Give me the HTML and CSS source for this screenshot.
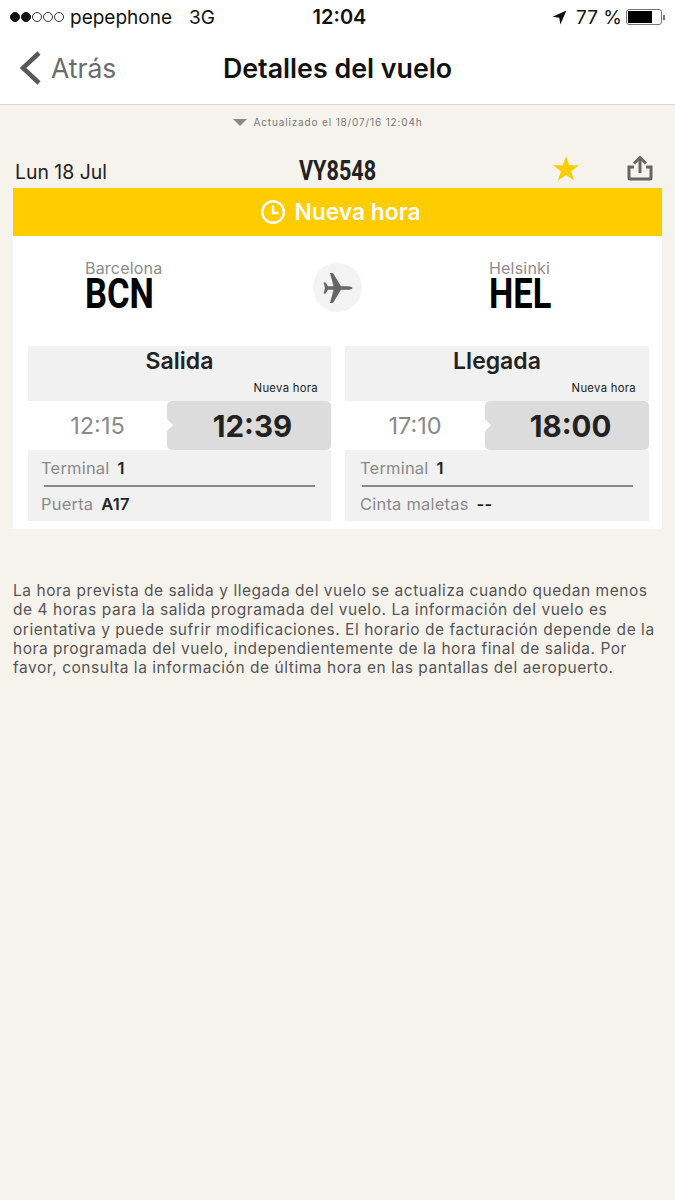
FILE: index.html
```html
<!DOCTYPE html>
<html lang="es">
<head>
    <meta charset="UTF-8">
    <meta name="viewport" content="width=device-width, initial-scale=1.0">
    <title>Detalles del vuelo</title>
    <link rel="stylesheet" href="styles.css">
</head>
<body>
<div class="top">
    <div class="status">
        <div class="status-left">
            <span class="dot on"></span><span class="dot on"></span><span class="dot"></span><span class="dot"></span><span class="dot"></span>
            <span class="carrier">pepephone</span>
            <span class="net">3G</span>
        </div>
        <div class="clock">12:04</div>
        <div class="status-right">
            <svg class="arrow" width="15" height="15" viewBox="0 0 14 14"><path d="M13.5 .5 L.5 6.300 L6.800 7.200 L7.800 13.500 Z" fill="#111"/></svg>
            <span class="pct">77 %</span>
            <div class="battery"><div class="battery-fill"></div></div>
            <div class="battery-tip"></div>
        </div>
    </div>
    <div class="nav">
        <div class="back">
            <svg width="24" height="36" viewBox="0 0 24 36"><path d="M21 3 L5 18 L21 33" fill="none" stroke="#595959" stroke-width="4.500"/></svg>
            <span>Atrás</span>
        </div>
        <div class="nav-title">Detalles del vuelo</div>
    </div>
</div>

<div class="updated"><span class="tri"></span>Actualizado el 18/07/16 12:04h</div>

<div class="flight-head">
    <div class="date">Lun 18 Jul</div>
    <div class="code">VY8548</div>
    <svg class="star" width="28" height="27" viewBox="0 0 28 27"><path d="M14 1 L17.200 10.300 L27 10.300 L19.100 16.200 L22 25.600 L14 20 L6 25.600 L8.900 16.200 L1 10.300 L10.800 10.300 Z" fill="#fc0"/></svg>
    <svg class="share" width="26" height="26" viewBox="0 0 26 26" fill="none" stroke="#666" stroke-width="3"><path d="M7 12 H2 V23 a1 1 0 0 0 1 1 H23 a1 1 0 0 0 1 -1 V12 H19"/><path d="M13 18 V3"/><path d="M7 8.500 L13 2.500 L19 8.500"/></svg>
</div>

<div class="banner">
    <svg width="26" height="26" viewBox="0 0 26 26" fill="none" stroke="#fff" stroke-width="2.400"><circle cx="13" cy="13" r="10.800"/><path d="M13 6.500 V14 H18.500"/></svg>
    <span>Nueva hora</span>
</div>

<div class="card">
    <div class="route">
        <div class="place place-from">
            <div class="city">Barcelona</div>
            <div class="iata">BCN</div>
        </div>
        <div class="plane">
            <svg width="30" height="30" viewBox="0 0 30 30"><path d="M29.500 15 C29 14 27 13.200 25 13.200 H18 L10 0 H7 L10.500 13.200 H5 L2.500 9.500 H.5 L2 15 L.5 20.500 H2.500 L5 16.800 H10.500 L7 30 H10 L18 16.800 H25 C27 16.800 29 16 29.500 15 Z" fill="#666"/></svg>
        </div>
        <div class="place place-to">
            <div class="city">Helsinki</div>
            <div class="iata">HEL</div>
        </div>
    </div>

    <div class="columns">
        <div class="col">
            <div class="col-head">
                <h2>Salida</h2>
                <div class="new-label">Nueva hora</div>
            </div>
            <div class="times">
                <div class="old-time">12:15</div>
                <div class="new-time">12:39</div>
            </div>
            <div class="info">
                <div class="info-row line"><span class="lbl">Terminal</span><b>1</b></div>
                <div class="info-row"><span class="lbl">Puerta</span><b>A17</b></div>
            </div>
        </div>
        <div class="col">
            <div class="col-head">
                <h2>Llegada</h2>
                <div class="new-label">Nueva hora</div>
            </div>
            <div class="times">
                <div class="old-time">17:10</div>
                <div class="new-time">18:00</div>
            </div>
            <div class="info">
                <div class="info-row line"><span class="lbl">Terminal</span><b>1</b></div>
                <div class="info-row"><span class="lbl">Cinta maletas</span><b>--</b></div>
            </div>
        </div>
    </div>
</div>

<p class="note">La hora prevista de salida y llegada del vuelo se actualiza cuando quedan menos<br>de 4 horas para la salida programada del vuelo. La información del vuelo es<br>orientativa y puede sufrir modificaciones. El horario de facturación depende de la<br>hora programada del vuelo, independientemente de la hora final de salida. Por<br>favor, consulta la información de última hora en las pantallas del aeropuerto.</p>
</body>
</html>
```

FILE: styles.css
```css
body {
    margin: 0;
    height: 1200px;
    overflow: hidden;
    background-color: #f6f3ed;
    font-family: Inter, "Liberation Sans", sans-serif;
    color: #222;
}
.top {
    background-color: #fff;
    border-bottom: 1px solid #d9d6d1;
    height: 104px;
}
.status {
    height: 34px;
    display: flex;
    align-items: center;
    justify-content: space-between;
    padding: 0 10px 0 10px;
    font-size: 19px;
    color: #111;
}
.status-left, .status-right {
    display: flex;
    align-items: center;
    width: 250px;
}
.status-right {
    justify-content: flex-end;
}
.dot {
    width: 10px;
    height: 10px;
    box-sizing: border-box;
    border: 1px solid #333;
    border-radius: 50%;
    margin-right: 1px;
}
.dot.on {
    background-color: #111;
    border-color: #111;
}
.carrier {
    margin-left: 5px;
}
.net {
    margin-left: 17px;
}
.clock {
    font-size: 20px;
    font-weight: 600;
    margin-left: 4px;
}
.pct {
    margin: 0 4px 0 9px;
}
.battery {
    width: 36px;
    height: 16px;
    box-sizing: border-box;
    border: 1px solid #777;
    border-radius: 3px;
    padding: 1px;
}
.battery-fill {
    width: 76%;
    height: 100%;
    background-color: #000;
}
.battery-tip {
    width: 2px;
    height: 5px;
    background-color: #777;
    margin-left: 1px;
}
.nav {
    height: 70px;
    display: flex;
    align-items: center;
    justify-content: center;
    position: relative;
}
.back {
    position: absolute;
    left: 18px;
    top: 16px;
    display: flex;
    align-items: center;
    gap: 9px;
    font-size: 26.500px;
    color: #6b6b6b;
}
.nav-title {
    font-size: 26.800px;
    font-weight: 600;
    color: #111;
    margin-top: -2px;
}
.updated {
    height: 34px;
    display: flex;
    align-items: center;
    justify-content: center;
    padding-right: 20px;
    font-size: 10px;
    letter-spacing: .85px;
    color: #777;
}
.tri {
    width: 0;
    height: 0;
    border-left: 7px solid transparent;
    border-right: 7px solid transparent;
    border-top: 7px solid #8a8a8a;
    margin-right: 7px;
}
.flight-head {
    margin: 16px 13px 0 15px;
    height: 33px;
    display: flex;
    align-items: flex-end;
    position: relative;
}
.date {
    font-size: 19.400px;
    padding-bottom: 4px;
}
.code {
    position: absolute;
    left: 284px;
    bottom: 1px;
    font-family: Roboto, sans-serif;
    font-size: 27px;
    font-weight: 700;
    transform: scaleX(.8);
    transform-origin: left;
}
.star {
    position: absolute;
    left: 537px;
    bottom: 6px;
}
.share {
    position: absolute;
    left: 612px;
    bottom: 7px;
}
.banner {
    margin: 0 13px;
    height: 47px;
    padding: 0 0 1px 6px;
    background-color: #fc0;
    color: #fff;
    display: flex;
    align-items: center;
    justify-content: center;
    gap: 8px;
    font-size: 22.800px;
    font-weight: 600;
}
.card {
    margin: 0 13px;
    background-color: #fff;
    height: 293px;
}
.route {
    height: 110px;
    display: flex;
    position: relative;
}
.place {
    position: absolute;
    top: 23px;
}
.place-from {
    left: 72px;
}
.place-to {
    left: 476px;
}
.city {
    font-size: 16px;
    line-height: 18px;
    letter-spacing: .2px;
    color: #8c8c8c;
}
.iata {
    font-family: Roboto, sans-serif;
    font-size: 42px;
    line-height: 34px;
    font-weight: 700;
    color: #000;
    transform: scaleX(.82);
    transform-origin: left;
}
.plane {
    position: absolute;
    left: 300px;
    top: 27px;
    width: 49px;
    height: 49px;
    border-radius: 50%;
    background-color: #f3f3f3;
    display: flex;
    align-items: center;
    justify-content: center;
}
.columns {
    display: flex;
    gap: 14px;
    padding: 0 13px 0 15px;
}
.col {
    width: 303px;
}
.col + .col {
    width: 304px;
}
.col-head {
    background-color: #f1f1f1;
    height: 55px;
    position: relative;
}
.col-head h2 {
    margin: 0;
    text-align: center;
    font-size: 23px;
    line-height: 31px;
    font-weight: 600;
}
.new-label {
    position: absolute;
    right: 13px;
    top: 35px;
    font-size: 11.300px;
    letter-spacing: .3px;
}
.times {
    height: 49px;
    display: flex;
    align-items: center;
}
.old-time {
    width: 139px;
    text-align: center;
    font-size: 23.500px;
    color: #8a8a8a;
}
.col + .col .old-time {
    width: 140px;
}
.new-time {
    flex: 1;
    height: 100%;
    box-sizing: border-box;
    padding-left: 7px;
    background-color: #dcdcdc;
    border-radius: 5px;
    display: flex;
    align-items: center;
    justify-content: center;
    font-size: 29.500px;
    font-weight: 700;
    position: relative;
}
.new-time::before {
    content: "";
    position: absolute;
    left: 0;
    top: 18px;
    border-left: 6px solid #fff;
    border-top: 6px solid transparent;
    border-bottom: 6px solid transparent;
}
.info {
    background-color: #f1f1f1;
    height: 71px;
    padding: 0 16px 0 13px;
}
.col + .col .info {
    padding-left: 15px;
}
.info-row {
    height: 34px;
    display: flex;
    align-items: center;
    gap: 8px;
    font-size: 16.500px;
    letter-spacing: .2px;
}
.info-row.line {
    height: 37px;
    box-sizing: border-box;
    border-bottom: 2px solid #888;
    margin-left: 3px;
    padding-top: 1px;
}
.col + .col .info-row.line {
    margin-left: 2px;
}
.info-row.line .lbl {
    margin-left: -3px;
}
.col + .col .info-row.line .lbl {
    margin-left: -2px;
}
.lbl {
    color: #8a8a8a;
}
.info-row b {
    font-weight: 600;
    color: #222;
}
.note {
    margin: 52px 13px 0;
    font-size: 15.500px;
    line-height: 19.300px;
    letter-spacing: .54px;
    color: #555;
    white-space: nowrap;
}
```
